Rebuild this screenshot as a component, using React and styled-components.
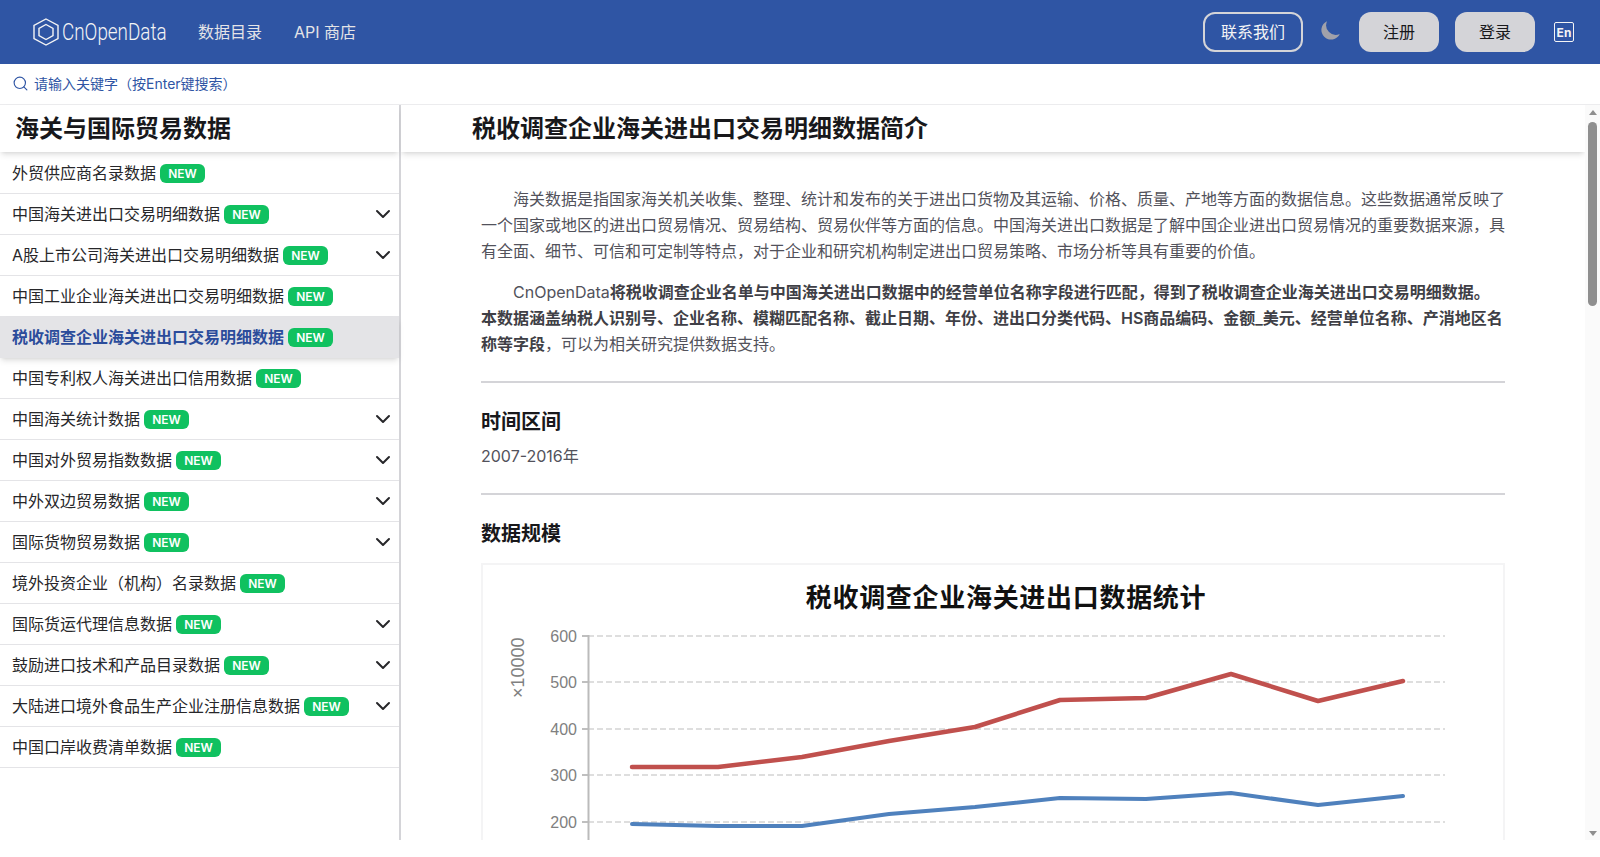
import React from "react";
import styled, {createGlobalStyle} from "styled-components";
import {ChevronDown, Search} from "lucide-react";

const GlobalStyle = createGlobalStyle`
  html, body {
    margin: 0;
    padding: 0;
    background: #fff;
  }
  * {
    box-sizing: border-box;
  }
  body {
    font-family: Inter, "Noto Sans CJK SC", sans-serif;
    font-size: 16px;
    color: #27272a;
  }
`;

const Page = styled.div`
  height: 840px;
  display: flex;
  flex-direction: column;
  overflow: hidden;
`;

const Navbar = styled.header`
  height: 64px;
  flex: none;
  background: #2f55a4;
  display: flex;
  align-items: center;
  padding: 0 26px 0 33px;
`;

const Brand = styled.div`
  display: flex;
  align-items: center;
  gap: 3px;
  color: #f4f4f5;
  width: 165px;
`;

const BrandName = styled.span`
  font-family: Roboto, sans-serif;
  font-weight: 300;
  font-size: 23px;
  display: inline-block;
  transform: scaleX(0.82);
  transform-origin: left center;
`;

const NavLink = styled.a`
  color: #e4e4e7;
  font-size: 16px;
  padding-bottom: 2px;
  margin-left: ${props => props.first ? "0" : "32px"};
`;

const NavRight = styled.div`
  margin-left: auto;
  display: flex;
  align-items: center;
`;

const ContactButton = styled.button`
  width: 100px;
  height: 40px;
  padding: 0 0 2px;
  border: 2px solid #d4d4d8;
  border-radius: 12px;
  background: transparent;
  color: #f4f4f5;
  font: inherit;
  margin-right: 16px;
`;

const AuthButton = styled.button`
  width: 80px;
  height: 40px;
  padding: 0 0 2px;
  border: none;
  border-radius: 12px;
  background: #d4d4d8;
  color: #18181b;
  font: inherit;
  margin-left: 16px;
`;

const ThemeIcon = styled.svg`
  width: 24px;
  height: 24px;
  fill: #a1a1aa;
  margin-bottom: 4px;
`;

const LangBox = styled.span`
  width: 20px;
  height: 20px;
  margin-left: 19px;
  border: 1.5px solid #f4f4f5;
  border-radius: 2px;
  color: #f4f4f5;
  font-size: 12px;
  font-weight: 700;
  display: flex;
  align-items: center;
  justify-content: center;
`;

const SearchBar = styled.div`
  height: 41px;
  flex: none;
  display: flex;
  align-items: center;
  gap: 5px;
  padding: 0 0 2px 12px;
  color: #2f55a4;
  font-size: 14px;
  border-bottom: 1px solid #ececee;
`;

const Body = styled.div`
  flex: 1;
  min-height: 0;
  display: flex;
`;

const Sidebar = styled.aside`
  width: 401px;
  flex: none;
  border-right: 2px solid #d4d4d8;
  display: flex;
  flex-direction: column;
`;

const SidebarTitle = styled.h2`
  height: 47px;
  margin: 0 0 1px;
  padding-left: 15px;
  font-size: 24px;
  line-height: 47px;
  font-weight: 700;
  color: #18181b;
  box-shadow: 0 4px 6px -1px rgba(0, 0, 0, .1), 0 2px 4px -2px rgba(0, 0, 0, .1);
`;

const Row = styled.div`
  height: 41px;
  display: flex;
  align-items: center;
  padding: 0 4px 0 12px;
  border-bottom: 1px solid #e4e4e7;
  background: ${props => props.active ? "#e4e4e7" : "transparent"};
  color: ${props => props.active ? "#2b4c9b" : "#27272a"};
  font-weight: ${props => props.active ? 600 : 400};
  box-shadow: ${props => props.active ? "0 4px 6px -1px rgba(0, 0, 0, .1), 0 2px 4px -2px rgba(0, 0, 0, .1)" : "none"};
`;

const RowLabel = styled.span`
  padding-bottom: 2px;
`;

const Badge = styled.span`
  width: 45px;
  height: 19px;
  margin-left: 4px;
  border-radius: 6px;
  background: #10c160;
  color: #fff;
  font-size: 12px;
  font-weight: 600;
  line-height: 19px;
  text-align: center;
`;

const Chevron = styled(ChevronDown)`
  margin-left: auto;
  color: #27272a;
`;

const Content = styled.main`
  flex: 1;
  min-width: 0;
  overflow: hidden;
`;

const ContentTitle = styled.h1`
  height: 47px;
  margin: 0;
  padding-left: 71px;
  background: #fff;
  font-size: 24px;
  line-height: 47px;
  font-weight: 700;
  color: #18181b;
  box-shadow: 0 4px 6px -1px rgba(0, 0, 0, .1), 0 2px 4px -2px rgba(0, 0, 0, .1);
`;

const Article = styled.article`
  width: 1024px;
  margin: 0 auto;
  padding-top: 34px;
`;

const Para = styled.p`
  margin: 0 0 15px;
  line-height: 26px;
  text-indent: 32px;
  color: #52525b;

  b {
    font-weight: 600;
    color: #3f3f46;
  }
`;

const Rule = styled.hr`
  height: 2px;
  margin: 24px 0;
  border: none;
  background: #d4d4d8;
`;

const SectionTitle = styled.h3`
  margin: 0;
  font-size: 20px;
  line-height: 30px;
  font-weight: 600;
  color: #18181b;
`;

const Period = styled.p`
  margin: 6px 0 0;
  line-height: 26px;
  color: #52525b;
`;

const ChartCard = styled.div`
  width: 1024px;
  height: 520px;
  margin-top: 14px;
  border: 2px solid #f4f4f5;
`;

const ChartSvg = styled.svg`
  display: block;
  width: 1020px;
  height: 516px;
`;

const ScrollRail = styled.div`
  width: 15px;
  flex: none;
  padding: 5px 0 4px;
  background: #fafafa;
  display: flex;
  flex-direction: column;
  align-items: center;
`;

const ScrollArrow = styled.span`
  width: 0;
  height: 0;
  border-left: 4.5px solid transparent;
  border-right: 4.5px solid transparent;
  border-bottom: ${props => props.down ? "none" : "5px solid #8f8f8f"};
  border-top: ${props => props.down ? "5px solid #8f8f8f" : "none"};
  margin-top: ${props => props.down ? "auto" : "0"};
`;

const ScrollThumb = styled.span`
  width: 9px;
  height: 184px;
  margin-top: 7px;
  border-radius: 5px;
  background: #8f8f8f;
`;

const menus = [
    ["外贸供应商名录数据", false],
    ["中国海关进出口交易明细数据", true],
    ["A股上市公司海关进出口交易明细数据", true],
    ["中国工业企业海关进出口交易明细数据", false],
    ["税收调查企业海关进出口交易明细数据", false, true],
    ["中国专利权人海关进出口信用数据", false],
    ["中国海关统计数据", true],
    ["中国对外贸易指数数据", true],
    ["中外双边贸易数据", true],
    ["国际货物贸易数据", true],
    ["境外投资企业（机构）名录数据", false],
    ["国际货运代理信息数据", true],
    ["鼓励进口技术和产品目录数据", true],
    ["大陆进口境外食品生产企业注册信息数据", true],
    ["中国口岸收费清单数据", false],
];

const redLine = "632,767 718,767 802,757 889,741 975,727 1060,700 1146,698 1231,674 1318,701 1403,681";
const blueLine = "632,824 718,826 802,826 889,814 975,807 1060,798 1146,799 1231,793 1318,805 1403,796";
const ticks = [[600, 636], [500, 682], [400, 729], [300, 775], [200, 822]];

function Logo() {
    return (
        <svg width="26" height="28" viewBox="0 0 26 28" fill="none" stroke="#f4f4f5" strokeWidth="1.4">
            <polygon points="13,1 25,7.5 25,20.5 13,27 1,20.5 1,7.5"/>
            <polygon points="13,6.5 20,10.3 20,17.7 13,21.5 6,17.7 6,10.3"/>
        </svg>
    );
}

function Chart() {
    return (
        <ChartSvg viewBox="483 565 1020 516">
            <text x="1006" y="607" textAnchor="middle" fontFamily="'Noto Sans CJK SC', sans-serif" fontSize="26" fontWeight="700" letterSpacing="0.7" fill="#111">税收调查企业海关进出口数据统计</text>
            <text x="0" y="0" transform="translate(524 698) rotate(-90)" fontFamily="'Liberation Sans', sans-serif" fontSize="18" fill="#808080">×10000</text>
            {ticks.map(([label, y]) => (
                <g key={label}>
                    <line x1="588" x2="1445" y1={y} y2={y} stroke="#d4d4d4" strokeWidth="1.5" strokeDasharray="6 3"/>
                    <line x1="582" x2="589" y1={y} y2={y} stroke="#aaa" strokeWidth="1.5"/>
                    <text x="577" y={y + 6} textAnchor="end" fontFamily="'Liberation Sans', sans-serif" fontSize="16" fill="#808080">{label}</text>
                </g>
            ))}
            <line x1="588.5" x2="588.5" y1="635" y2="1000" stroke="#bbb" strokeWidth="2"/>
            <polyline points={redLine} fill="none" stroke="#c0504d" strokeWidth="4.5" strokeLinecap="round" strokeLinejoin="round"/>
            <polyline points={blueLine} fill="none" stroke="#4f81bd" strokeWidth="4" strokeLinecap="round" strokeLinejoin="round"/>
        </ChartSvg>
    );
}

export default function App() {
    return (
        <Page>
            <GlobalStyle/>
            <Navbar>
                <Brand>
                    <Logo/>
                    <BrandName>CnOpenData</BrandName>
                </Brand>
                <NavLink first>数据目录</NavLink>
                <NavLink>API 商店</NavLink>
                <NavRight>
                    <ContactButton>联系我们</ContactButton>
                    <ThemeIcon viewBox="0 0 20 20">
                        <path d="M17.293 13.293A8 8 0 016.707 2.707a8.001 8.001 0 1010.586 10.586z"/>
                    </ThemeIcon>
                    <AuthButton>注册</AuthButton>
                    <AuthButton>登录</AuthButton>
                    <LangBox>En</LangBox>
                </NavRight>
            </Navbar>
            <SearchBar>
                <Search size={17} strokeWidth={1.6}/>
                请输入关键字（按Enter键搜索）
            </SearchBar>
            <Body>
                <Sidebar>
                    <SidebarTitle>海关与国际贸易数据</SidebarTitle>
                    {menus.map(([label, more, active], index) => (
                        <Row key={index} active={active}>
                            <RowLabel>{label}</RowLabel>
                            <Badge>NEW</Badge>
                            {more && <Chevron size={24} strokeWidth={2}/>}
                        </Row>
                    ))}
                </Sidebar>
                <Content>
                    <ContentTitle>税收调查企业海关进出口交易明细数据简介</ContentTitle>
                    <Article>
                        <Para>海关数据是指国家海关机关收集、整理、统计和发布的关于进出口货物及其运输、价格、质量、产地等方面的数据信息。这些数据通常反映了一个国家或地区的进出口贸易情况、贸易结构、贸易伙伴等方面的信息。中国海关进出口数据是了解中国企业进出口贸易情况的重要数据来源，具有全面、细节、可信和可定制等特点，对于企业和研究机构制定进出口贸易策略、市场分析等具有重要的价值。</Para>
                        <Para>CnOpenData<b>将税收调查企业名单与中国海关进出口数据中的经营单位名称字段进行匹配，得到了税收调查企业海关进出口交易明细数据。本数据涵盖纳税人识别号、企业名称、模糊匹配名称、截止日期、年份、进出口分类代码、HS商品编码、金额_美元、经营单位名称、产消地区名称等字段</b>，可以为相关研究提供数据支持。</Para>
                        <Rule/>
                        <SectionTitle>时间区间</SectionTitle>
                        <Period>2007-2016年</Period>
                        <Rule/>
                        <SectionTitle>数据规模</SectionTitle>
                        <ChartCard>
                            <Chart/>
                        </ChartCard>
                    </Article>
                </Content>
                <ScrollRail>
                    <ScrollArrow/>
                    <ScrollThumb/>
                    <ScrollArrow down/>
                </ScrollRail>
            </Body>
        </Page>
    );
}
